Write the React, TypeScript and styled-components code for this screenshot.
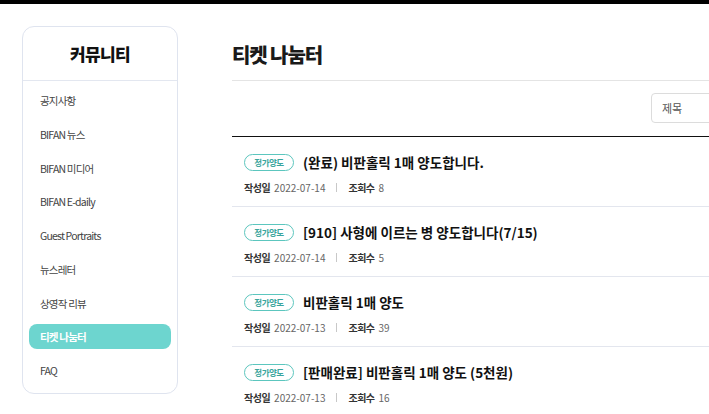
import styled, { createGlobalStyle } from 'styled-components';

const GlobalStyle = createGlobalStyle`
  html, body {
    margin: 0;
    padding: 0;
    background: #fff;
    overflow: hidden;
  }
  body {
    font-family: 'Noto Sans CJK KR', 'Noto Sans', sans-serif;
    color: #222;
  }
`;

const TopBar = styled.div`
  height: 4px;
  background: #000;
`;

const Page = styled.div`
  display: flex;
  align-items: flex-start;
  gap: 54px;
  padding: 22px 0 0 22px;
`;

const Sidebar = styled.aside`
  flex: none;
  width: 154px;
  border: 1px solid #dfe4ef;
  border-radius: 12px;
  background: #fff;
`;

const SideTitle = styled.h2`
  margin: 0;
  height: 53px;
  display: flex;
  align-items: center;
  justify-content: center;
  font-size: 17px;
  font-weight: 800;
  letter-spacing: -0.6px;
  color: #111;
  border-bottom: 1px solid #e3e7f0;
`;

const Menu = styled.ul`
  list-style: none;
  margin: 0;
  padding: 7px 6px 10px;
  display: flex;
  flex-direction: column;
  gap: 8.75px;
`;

const MenuItem = styled.li<{ $active?: boolean }>`
  height: 25px;
  display: flex;
  align-items: center;
  padding-left: 11px;
  border-radius: 8px;
  font-size: 10.5px;
  letter-spacing: -0.8px;
  font-weight: ${(p) => (p.$active ? 700 : 400)};
  color: ${(p) => (p.$active ? '#fff' : '#444')};
  background: ${(p) => (p.$active ? '#6dd5cf' : 'transparent')};
`;

const Main = styled.main`
  flex: none;
  width: 559px;
`;

const Title = styled.h1`
  margin: 0;
  padding: 15px 0 11px;
  height: 28px;
  line-height: 28px;
  font-size: 20px;
  font-weight: 800;
  letter-spacing: -1.1px;
  color: #1a1a1a;
  border-bottom: 1px solid #e4e4e4;
`;

const Toolbar = styled.div`
  display: flex;
  justify-content: flex-end;
  padding: 12px 0 13px;
  border-bottom: 1.5px solid #111;
`;

const SelectBox = styled.div`
  width: 128px;
  height: 28px;
  border: 1px solid #dcdcdc;
  border-radius: 4px;
  display: flex;
  align-items: center;
  padding-left: 10px;
  font-size: 11px;
  color: #555;
`;

const Row = styled.div`
  padding: 15px 0 12px 12px;
  border-bottom: 1px solid #e3e6ee;
  display: flex;
  flex-direction: column;
  gap: 8px;
`;

const TitleLine = styled.div`
  height: 20px;
  display: flex;
  align-items: center;
  gap: 9px;
`;

const Badge = styled.span`
  flex: none;
  width: 48px;
  height: 15px;
  border: 1px solid #5cc6be;
  border-radius: 9px;
  display: flex;
  align-items: center;
  justify-content: center;
  font-size: 8.5px;
  font-weight: 700;
  letter-spacing: -0.5px;
  color: #3aa59d;
`;

const PostTitle = styled.span`
  font-size: 13.5px;
  font-weight: 700;
  letter-spacing: 0;
  color: #111;
  white-space: nowrap;
`;

const Meta = styled.div`
  height: 14px;
  display: flex;
  align-items: center;
  font-size: 10px;
  color: #666;
`;

const MetaLabel = styled.b`
  font-weight: 700;
  color: #333;
  margin-right: 4px;
  letter-spacing: -0.5px;
`;

const Sep = styled.span`
  width: 1px;
  height: 9px;
  background: #c8c8c8;
  margin: 0 11px 0 11px;
`;

const menu = [
  '공지사항',
  'BIFAN 뉴스',
  'BIFAN 미디어',
  'BIFAN E-daily',
  'Guest Portraits',
  '뉴스레터',
  '상영작 리뷰',
  '티켓 나눔터',
  'FAQ',
];

const posts = [
  { title: '(완료) 비판홀릭 1매 양도합니다.', date: '2022-07-14', views: 8 },
  { title: '[910] 사형에 이르는 병 양도합니다(7/15)', date: '2022-07-14', views: 5 },
  { title: '비판홀릭 1매 양도', date: '2022-07-13', views: 39 },
  { title: '[판매완료] 비판홀릭 1매 양도 (5천원)', date: '2022-07-13', views: 16 },
];

export default function App() {
  return (
    <>
      <GlobalStyle />
      <TopBar />
      <Page>
        <Sidebar>
          <SideTitle>커뮤니티</SideTitle>
          <Menu>
            {menu.map((m) => (
              <MenuItem key={m} $active={m === '티켓 나눔터'}>
                {m}
              </MenuItem>
            ))}
          </Menu>
        </Sidebar>
        <Main>
          <Title>티켓 나눔터</Title>
          <Toolbar>
            <SelectBox>제목</SelectBox>
          </Toolbar>
          {posts.map((p) => (
            <Row key={p.title}>
              <TitleLine>
                <Badge>정가양도</Badge>
                <PostTitle>{p.title}</PostTitle>
              </TitleLine>
              <Meta>
                <MetaLabel>작성일</MetaLabel>
                {p.date}
                <Sep />
                <MetaLabel>조회수</MetaLabel>
                {p.views}
              </Meta>
            </Row>
          ))}
        </Main>
      </Page>
    </>
  );
}
